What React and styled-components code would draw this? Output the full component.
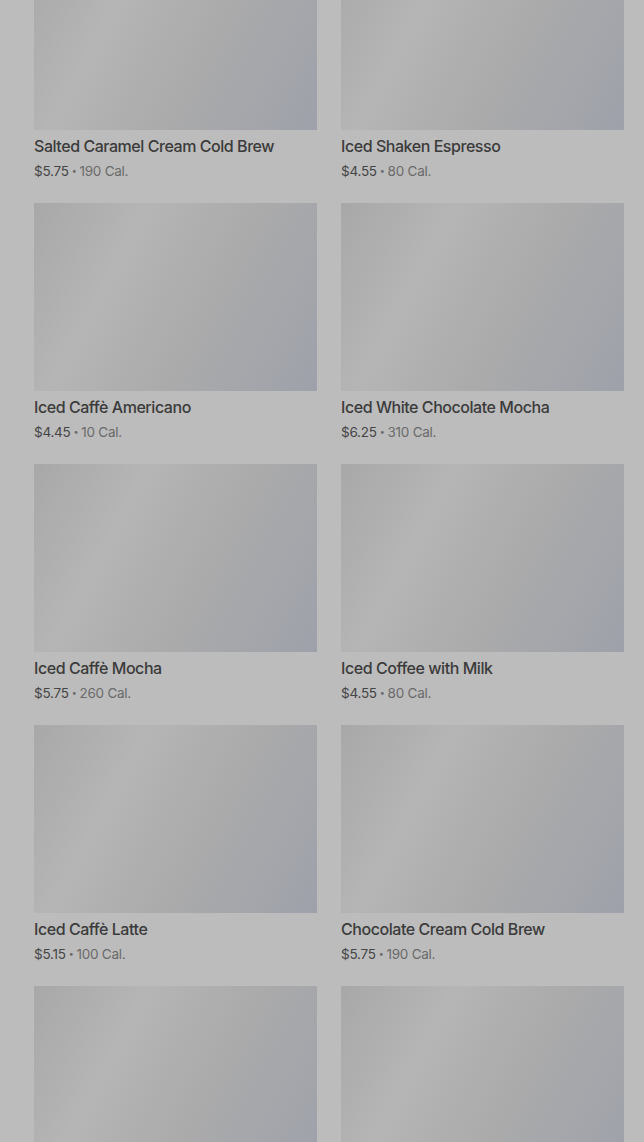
import React from 'react';
import { styled, createGlobalStyle } from 'styled-components';

const items = [
  { name: 'Salted Caramel Cream Cold Brew', price: '$5.75', cal: '190 Cal.' },
  { name: 'Iced Shaken Espresso', price: '$4.55', cal: '80 Cal.' },
  { name: 'Iced Caffè Americano', price: '$4.45', cal: '10 Cal.' },
  { name: 'Iced White Chocolate Mocha', price: '$6.25', cal: '310 Cal.' },
  { name: 'Iced Caffè Mocha', price: '$5.75', cal: '260 Cal.' },
  { name: 'Iced Coffee with Milk', price: '$4.55', cal: '80 Cal.' },
  { name: 'Iced Caffè Latte', price: '$5.15', cal: '100 Cal.' },
  { name: 'Chocolate Cream Cold Brew', price: '$5.75', cal: '190 Cal.' },
  { name: 'Iced Brown Sugar Oatmilk Shaken Espresso', price: '$5.95', cal: '120 Cal.' },
  { name: 'Vanilla Sweet Cream Cold Brew', price: '$5.45', cal: '110 Cal.' },
];

const GlobalStyle = createGlobalStyle`
  html, body {
    margin: 0;
    background: #bcbcbc;
    overflow: hidden;
  }
  body {
    font-family: Inter, "Liberation Sans", sans-serif;
  }
`;

function ItemCard({ name, price, cal }) {
  return (
    <Card>
      <Picture />
      <Name>{name}</Name>
      <Meta>
        <Price>{price}</Price>
        <Dot>•</Dot>
        <Cal>{cal}</Cal>
      </Meta>
    </Card>
  );
}

function App() {
  return (
    <>
      <GlobalStyle />
      <Page>
        <Grid>
          {items.map((item) => (
            <ItemCard key={item.name} {...item} />
          ))}
        </Grid>
      </Page>
    </>
  );
}

const Page = styled.main`
  height: 1142px;
  overflow: hidden;
  padding: 0 20px 0 34px;
`;

// list is scrolled: the first row's picture starts above the fold
const Grid = styled.div`
  margin-top: -58px;
  display: grid;
  grid-template-columns: 283px 283px;
  column-gap: 24px;
  row-gap: 22px;
`;

const Card = styled.article`
  display: flex;
  flex-direction: column;
`;

const Picture = styled.div`
  height: 188px;
  background: linear-gradient(
    118deg,
    #a8a8a8 0%,
    #b5b5b5 30%,
    #ababab 58%,
    #9ea1aa 100%
  );
`;

const Name = styled.h3`
  margin: 6px 0 0;
  font-size: 16px;
  line-height: 20px;
  font-weight: 500;
  color: #3b3b3b;
  letter-spacing: -0.45px;
  white-space: nowrap;
`;

const Meta = styled.p`
  margin: 5px 0 0;
  display: flex;
  align-items: center;
  gap: 3px;
  font-size: 13.5px;
  line-height: 20px;
  letter-spacing: -0.25px;
`;

const Price = styled.span`
  color: #454545;
`;

const Dot = styled.span`
  color: #6a6a6a;
  font-size: 9px;
`;

const Cal = styled.span`
  color: #6a6a6a;
`;

export default App;
